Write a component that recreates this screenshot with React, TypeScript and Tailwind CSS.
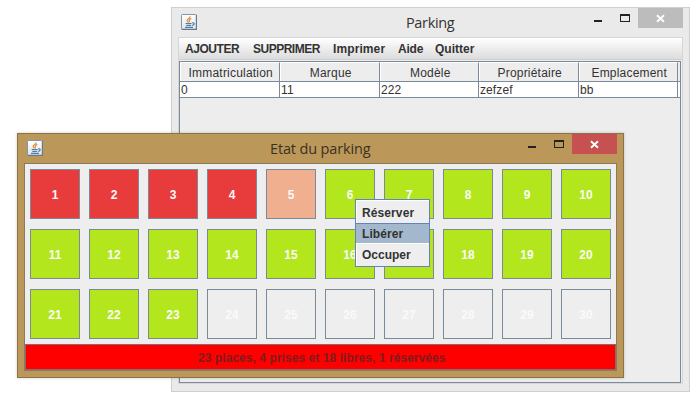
import React from 'react';

type WindowControlsProps = { closeClass: string; markClass: string };

function JavaIcon() {
  return (
    <svg className="block h-4 w-4" viewBox="0 0 16 16" fill="none">
      <defs>
        <linearGradient id="tile" x1="0" y1="0" x2="0" y2="1">
          <stop offset="0" stopColor="#ffffff" />
          <stop offset="1" stopColor="#dfe5ea" />
        </linearGradient>
      </defs>
      <rect x="0.5" y="0.5" width="15" height="15" rx="0.8" fill="url(#tile)" stroke="#8096a9" />
      <path d="M0.8 15.4H15.4V1" stroke="#5e7b93" strokeWidth="1.2" />
      <path d="M9.2 2.4C9.4 4.4 5.6 5 6.1 6.7C6.3 7.4 6.9 7.6 7 8.4M10.4 4.5C8.7 5.2 7.8 6 8.3 6.9C8.7 7.6 8.4 8 8 8.5" stroke="#e08a3c" strokeWidth="1.2" />
      <path d="M4.6 9.5H10.6M5.3 11.4H10.2M11.2 8.9C13.9 8.4 13.8 10.9 11.2 11.3M4 13.3H12" stroke="#527da0" strokeWidth="1.2" />
    </svg>
  );
}

function WindowControls({ closeClass, markClass }: WindowControlsProps) {
  return (
    <div className="flex h-5">
      <svg className="block h-5 w-[52px]" viewBox="0 0 52 20" fill="#222222" shapeRendering="crispEdges">
        <rect x="8" y="12" width="8" height="2" />
        <path fillRule="evenodd" d="M34 6H44V14H34ZM35 8V13H43V8Z" />
      </svg>
      <div className={`flex h-5 w-[45px] items-center justify-center ${closeClass}`}>
        <svg className={`block h-[9px] w-[9px] ${markClass}`} viewBox="0 0 9 9">
          <path d="M1 1.3L8 7.7M8 1.3L1 7.7" stroke="currentColor" strokeWidth="1.9" />
        </svg>
      </div>
    </div>
  );
}

const menus = [
  { label: 'AJOUTER', cls: 'w-[68px] tracking-[-0.45px]' },
  { label: 'SUPPRIMER', cls: 'w-[80px] tracking-[-0.5px]' },
  { label: 'Imprimer', cls: 'w-[65px] tracking-[0.1px]' },
  { label: 'Aide', cls: 'w-[37px] tracking-[-0.2px]' },
  { label: 'Quitter', cls: 'w-[60px]' },
];

const columns = [
  { title: 'Immatriculation', value: '0', cls: 'w-[100px]' },
  { title: 'Marque', value: '11', cls: 'w-[100px]' },
  { title: 'Modèle', value: '222', cls: 'w-[99px]' },
  { title: 'Propriétaire', value: 'zefzef', cls: 'w-[100px]' },
  { title: 'Emplacement', value: 'bb', cls: 'w-[99px]' },
];

function ParkingWindow() {
  return (
    <div className="absolute left-[171px] top-[7px] flex h-[385px] w-[519px] flex-col border border-[#cfcfcf] bg-[#eaeaea] px-1.5 pb-[7px]">
      <div className="relative flex h-[29px] shrink-0 justify-between">
        <div className="pl-[3px] pt-1.5"><JavaIcon /></div>
        <div className="absolute left-[228px] top-[5px] whitespace-nowrap font-['Open_Sans',sans-serif] text-[14.5px] leading-5 tracking-[-0.35px] text-[#333]">Parking</div>
        <div><WindowControls closeClass="bg-[#bcbcbc]" markClass="text-white" /></div>
      </div>
      <div className="flex min-h-0 flex-1 flex-col border border-[#d6d6d6] bg-[#eeeeee]">
        <div className="flex h-[22px] shrink-0 items-center border-b border-[#cfcfcf] bg-linear-to-b from-white to-[#dcdcdc] pl-1.5 font-bold">
          {menus.map((m) => (
            <div key={m.label} className={`whitespace-nowrap ${m.cls}`}>{m.label}</div>
          ))}
        </div>
        <div className="mt-px flex min-h-0 w-[502px] flex-1 flex-col border border-[#7a8a99] bg-[#ededed]">
          <div className="flex h-5 shrink-0 border-b border-[#7a8a99] tracking-[0.2px]">
            {columns.map((c) => (
              <div key={c.title} className={`flex items-center justify-center border-l border-r border-t border-l-white border-r-[#7a8a99] border-t-white pl-[1.5px] pt-0.5 ${c.cls}`}>{c.title}</div>
            ))}
          </div>
          <div className="flex h-4 shrink-0 border-b border-[#7a8a99] bg-white">
            {columns.map((c) => (
              <div key={c.title} className={`flex items-center border-r border-[#7a8a99] pl-px tracking-[0.1px] ${c.cls}`}>{c.value}</div>
            ))}
          </div>
        </div>
      </div>
    </div>
  );
}

const spots = Array.from({ length: 30 }, (_, i) => i + 1);

function spotColor(n: number) {
  if (n <= 4) return 'bg-[#e83c3c]';
  if (n === 5) return 'bg-[#f0b090]';
  if (n <= 23) return 'bg-[#b4e61d]';
  return 'bg-[#eeeeee]';
}

function StateWindow() {
  return (
    <div className="absolute left-[17px] top-[133px] flex h-[245px] w-[607px] flex-col border border-[#8c7345] bg-[#bb9859] px-1.5 pb-1.5 shadow-[0_0_3px_rgba(0,0,0,0.2)]">
      <div className="relative flex h-[29px] shrink-0 justify-between">
        <div className="pl-[3px] pt-1.5"><JavaIcon /></div>
        <div className="absolute left-[246px] top-[5px] whitespace-nowrap font-['Open_Sans',sans-serif] text-[14.5px] leading-5 tracking-[-0.15px] text-[#3a3122]">Etat du parking</div>
        <div><WindowControls closeClass="bg-[#c75050]" markClass="text-white" /></div>
      </div>
      <div className="flex min-h-0 flex-1 flex-col border border-[#8c7a5c] bg-[#eeeeee]">
        <div className="grid grid-cols-[repeat(10,50px)] gap-x-[9px] gap-y-2.5 pl-[5px] pt-[5px]">
          {spots.map((n) => (
            <div key={n} className={`flex h-[50px] items-center justify-center border border-[#7a8a99] pt-px font-bold text-[#fafafa] ${spotColor(n)}`}>{n}</div>
          ))}
        </div>
        <div className="mt-[5px] flex h-[26px] items-center border border-[#8a6a70] bg-[#ff0000] pl-[172px] pt-0.5 font-bold tracking-[0.06px] text-[#801c1c]">
          <span className="whitespace-nowrap">23 places, 4 prises et 18 libres, 1 réservées</span>
        </div>
      </div>
    </div>
  );
}

function ContextMenu() {
  return (
    <div className="absolute left-[355px] top-[199px] flex h-[68px] w-[75px] flex-col border border-[#6382bf] bg-[#eeeeee] font-bold">
      <div className="flex h-[23px] items-center border-l border-t border-white pl-[5px] pt-0.5 tracking-[0.1px]">Réserver</div>
      <div className="flex h-[21px] items-center border-b border-t border-b-white border-t-[#6382bf] bg-[#a3b8cc] pl-1.5 tracking-[0.1px]">Libérer</div>
      <div className="flex flex-1 items-center border-l border-white pl-[5px]">Occuper</div>
    </div>
  );
}

export default function App() {
  return (
    <div className="relative h-[404px] w-[698px] overflow-hidden bg-white font-['Liberation_Sans',Arial,sans-serif] text-[12px] leading-[14px] text-[#333]">
      <ParkingWindow />
      <StateWindow />
      <ContextMenu />
    </div>
  );
}
